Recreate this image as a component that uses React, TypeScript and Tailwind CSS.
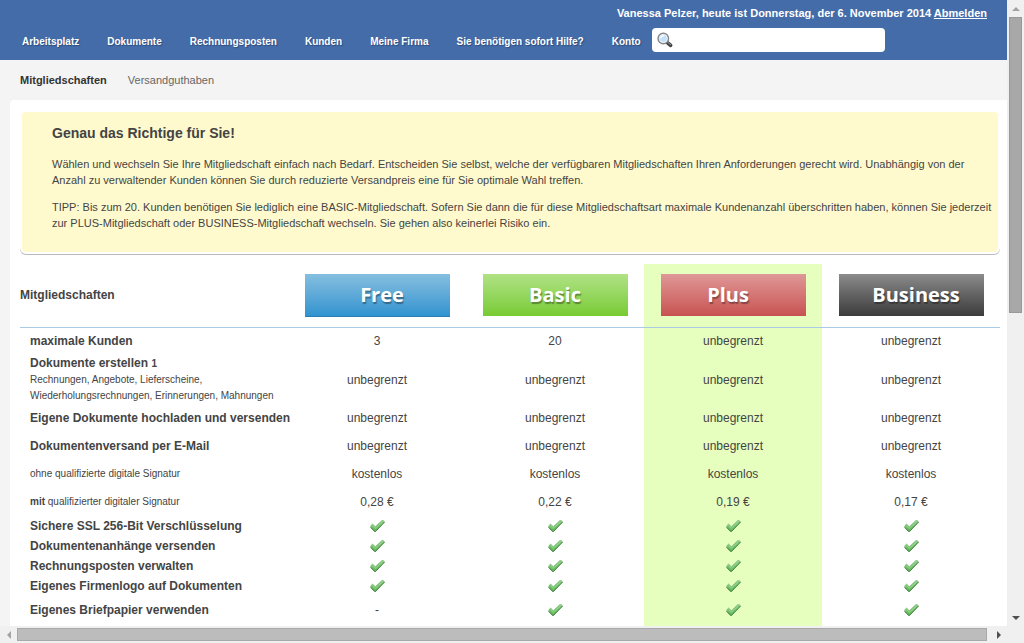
import type { ReactNode } from "react";

const navItems = [
  "Arbeitsplatz",
  "Dokumente",
  "Rechnungsposten",
  "Kunden",
  "Meine Firma",
  "Sie benötigen sofort Hilfe?",
  "Konto",
];

const plans = [
  { name: "Free", style: "h-[43px] pl-[10px] border-b border-[#2b7cb4] from-[#84bfe0] to-[#2f93cf]" },
  { name: "Basic", style: "h-[42px] from-[#b0e283] to-[#78cb30]" },
  { name: "Plus", style: "h-[42px] pr-[10px] from-[#df9797] to-[#c75252]" },
  { name: "Business", style: "h-[42px] pl-[10px] from-[#8c8c8c] to-[#3c3c3c]" },
];

type Row = { label: ReactNode; height: string; small?: boolean; values: string[] };

const unlimited = ["unbegrenzt", "unbegrenzt", "unbegrenzt", "unbegrenzt"];
const all = ["check", "check", "check", "check"];

const rows: Row[] = [
  {
    label: "maximale Kunden",
    height: "h-7",
    values: ["3", "20", "unbegrenzt", "unbegrenzt"],
  },
  {
    label: (
      <>
        Dokumente erstellen <span className="text-[10px]">1</span>
        <span className="block text-[10px] leading-4 font-normal">
          Rechnungen, Angebote, Lieferscheine,
          <br />
          Wiederholungsrechnungen, Erinnerungen, Mahnungen
        </span>
      </>
    ),
    height: "h-12",
    values: unlimited,
  },
  { label: "Eigene Dokumente hochladen und versenden", height: "h-7", values: unlimited },
  { label: "Dokumentenversand per E-Mail", height: "h-7", values: unlimited },
  {
    label: "ohne qualifizierte digitale Signatur",
    height: "h-7",
    small: true,
    values: ["kostenlos", "kostenlos", "kostenlos", "kostenlos"],
  },
  {
    label: (
      <>
        <b>mit</b> qualifizierter digitaler Signatur
      </>
    ),
    height: "h-7",
    small: true,
    values: ["0,28 €", "0,22 €", "0,19 €", "0,17 €"],
  },
  { label: "Sichere SSL 256-Bit Verschlüsselung", height: "h-5", values: all },
  { label: "Dokumentenanhänge versenden", height: "h-5", values: all },
  { label: "Rechnungsposten verwalten", height: "h-5", values: all },
  { label: "Eigenes Firmenlogo auf Dokumenten", height: "h-5", values: all },
  {
    label: "Eigenes Briefpapier verwenden",
    height: "h-7",
    values: ["-", "check", "check", "check"],
  },
];

function CheckIcon() {
  return (
    <svg width="15" height="12" viewBox="0 0 15 12" className="mx-auto" role="img" aria-label="ja">
      <defs>
        <linearGradient id="check" x1="0" y1="0" x2="0" y2="1">
          <stop offset="0" stopColor="#93cf8c" />
          <stop offset="1" stopColor="#5fb457" />
        </linearGradient>
      </defs>
      <path
        d="M0.8 5.8 L2.6 4.1 L5.3 6.7 L11.8 0.6 H13.4 L14.5 1.9 L5.4 11.5 H4.6 L0.8 7.6 Z"
        fill="url(#check)"
        stroke="#8dbf89"
        strokeWidth="0.8"
      />
      <path d="M0.8 7.4 L4.6 11.4 H5.5 L14.5 2" fill="none" stroke="#3c8138" strokeWidth="1" />
      <path d="M2.4 5.6 L5.2 8.4 L12.6 1.8" fill="none" stroke="#8ed886" strokeWidth="1" />
    </svg>
  );
}

function SearchIcon() {
  return (
    <svg width="16" height="16" viewBox="0 0 16 16" className="shrink-0" aria-hidden="true">
      <path d="M10.4 10.6 L13.6 13.4" stroke="#3d3d3d" strokeWidth="3.6" strokeLinecap="round" />
      <path d="M10.8 10.4 L13.6 12.8" stroke="#a5a5a5" strokeWidth="1" strokeLinecap="round" />
      <circle cx="6.3" cy="6.5" r="5.2" fill="#c4e0f8" stroke="#858585" strokeWidth="1.5" />
      <circle cx="6.3" cy="6.5" r="4" fill="none" stroke="#eef6fd" strokeWidth="0.9" />
      <path d="M4 6.1 A2.5 2.5 0 0 1 7 3.9" fill="none" stroke="#fff" strokeWidth="1.2" />
    </svg>
  );
}

function Arrow({ points, color }: { points: string; color: string }) {
  return (
    <span className="flex size-[17px] shrink-0 items-center justify-center">
      <svg width="8" height="8" viewBox="0 0 8 8">
        <polygon points={points} className={color} />
      </svg>
    </span>
  );
}

export default function App() {
  return (
    <div className="flex h-screen flex-col overflow-hidden bg-[#f0f0f0] font-['Liberation_Sans',Arial,sans-serif] text-[#444]">
      <div className="flex min-h-0 flex-1">
        <div className="min-w-0 flex-1 overflow-hidden bg-[#f4f4f4]">
          {/* Header */}
          <header className="bg-[#446ca9] pb-2 text-[11px] font-bold text-white">
            <p className="pt-[5px] pr-5 text-right leading-4">
              Vanessa Pelzer, heute ist Donnerstag, der 6. November 2014{" "}
              <a href="#abmelden" className="underline">
                Abmelden
              </a>
            </p>
            <div className="mt-[7px] flex items-center gap-[11px] pl-[22px]">
              <nav className="flex gap-7 pt-[3px] text-[10px] leading-4 whitespace-nowrap text-shadow-[1px_1px_1px_#2c4c7c]">
                {navItems.map((item) => (
                  <a key={item} href="#nav">
                    {item}
                  </a>
                ))}
              </nav>
              <label className="flex h-6 w-[233px] items-center gap-1 rounded bg-white px-[5px]">
                <SearchIcon />
                <input
                  type="search"
                  aria-label="Suche"
                  className="min-w-0 flex-1 font-normal text-[#444] outline-none"
                />
              </label>
            </div>
          </header>

          {/* Sub navigation */}
          <nav className="flex h-10 items-center gap-[21px] pl-5 text-[11px]">
            <a href="#mitgliedschaften" className="font-bold text-[#333]">
              Mitgliedschaften
            </a>
            <a href="#versandguthaben" className="text-[#666]">
              Versandguthaben
            </a>
          </nav>

          <main className="ml-[10px] rounded-tl bg-white pt-[10px] pr-[7px] pl-[10px]">
            {/* Notice */}
            <section className="rounded-md border-2 border-white bg-[#fffacd] pt-3 pr-[2px] pb-[21px] pl-[30px] text-[11px] leading-4 shadow-[0_1px_0_#bbb]">
              <h1 className="text-[14px] leading-[18px] font-bold">Genau das Richtige für Sie!</h1>
              <p className="mt-[14px]">
                Wählen und wechseln Sie Ihre Mitgliedschaft einfach nach Bedarf. Entscheiden Sie
                selbst, welche der verfügbaren Mitgliedschaften Ihren Anforderungen gerecht wird.
                Unabhängig von der Anzahl zu verwaltender Kunden können Sie durch reduzierte
                Versandpreis eine für Sie optimale Wahl treffen.
              </p>
              <p className="mt-[11px]">
                TIPP: Bis zum 20. Kunden benötigen Sie lediglich eine BASIC-Mitgliedschaft. Sofern
                Sie dann die für diese Mitgliedschaftsart maximale Kundenanzahl überschritten haben,
                können Sie jederzeit zur PLUS-Mitgliedschaft oder BUSINESS-Mitgliedschaft wechseln.
                Sie gehen also keinerlei Risiko ein.
              </p>
            </section>

            {/* Plan comparison */}
            <table className="mt-[10px] w-full table-fixed text-[12px] leading-4">
              <colgroup>
                <col />
                <col className="w-[178px]" />
                <col className="w-[178px]" />
                <col className="w-[178px] bg-[#e6ffbf]" />
                <col className="w-[178px]" />
              </colgroup>
              <thead>
                <tr className="h-[63px] border-b border-[#a9cbe6]">
                  <th scope="col" className="text-left">
                    Mitgliedschaften
                  </th>
                  {plans.map((plan) => (
                    <th key={plan.name} scope="col" className="pt-[10px] align-top">
                      <button
                        type="button"
                        className={`mx-auto block w-[145px] bg-linear-to-b font-['Open_Sans',sans-serif] text-[20px] leading-none font-bold text-white text-shadow-[1px_2px_1px_rgb(0_0_0/0.35)] ${plan.style}`}
                      >
                        {plan.name}
                      </button>
                    </th>
                  ))}
                </tr>
              </thead>
              <tbody>
                {rows.map((row, i) => (
                  <tr key={i} className={row.height}>
                    <th
                      scope="row"
                      className={`pl-[10px] text-left whitespace-nowrap ${row.small ? "text-[10px] font-normal" : ""}`}
                    >
                      {row.label}
                    </th>
                    {row.values.map((value, j) => (
                      <td key={j} className="text-center">
                        {value === "check" ? <CheckIcon /> : value}
                      </td>
                    ))}
                  </tr>
                ))}
              </tbody>
              <tfoot>
                <tr className="h-5">
                  <td colSpan={3} />
                  <td />
                  <td />
                </tr>
              </tfoot>
            </table>
          </main>
        </div>

        {/* Vertical scrollbar */}
        <div className="flex w-[17px] flex-col justify-between" aria-hidden="true">
          <Arrow points="4,2 8,6 0,6" color="fill-[#a3a3a3]" />
          <div className="flex-1">
            <div className="mx-[2px] h-1/2 border border-[#999] bg-[#a8a8a8]" />
          </div>
          <Arrow points="0,2 8,2 4,6" color="fill-[#505050]" />
        </div>
      </div>

      {/* Horizontal scrollbar */}
      <div className="flex h-[17px] shrink-0 pr-[17px]" aria-hidden="true">
        <Arrow points="2,4 6,0 6,8" color="fill-[#a3a3a3]" />
        <div className="my-[2px] mr-[3px] flex-1 border border-[#a8a8a8] bg-[#bcbcbc]" />
        <Arrow points="2,0 6,4 2,8" color="fill-[#505050]" />
      </div>
    </div>
  );
}
